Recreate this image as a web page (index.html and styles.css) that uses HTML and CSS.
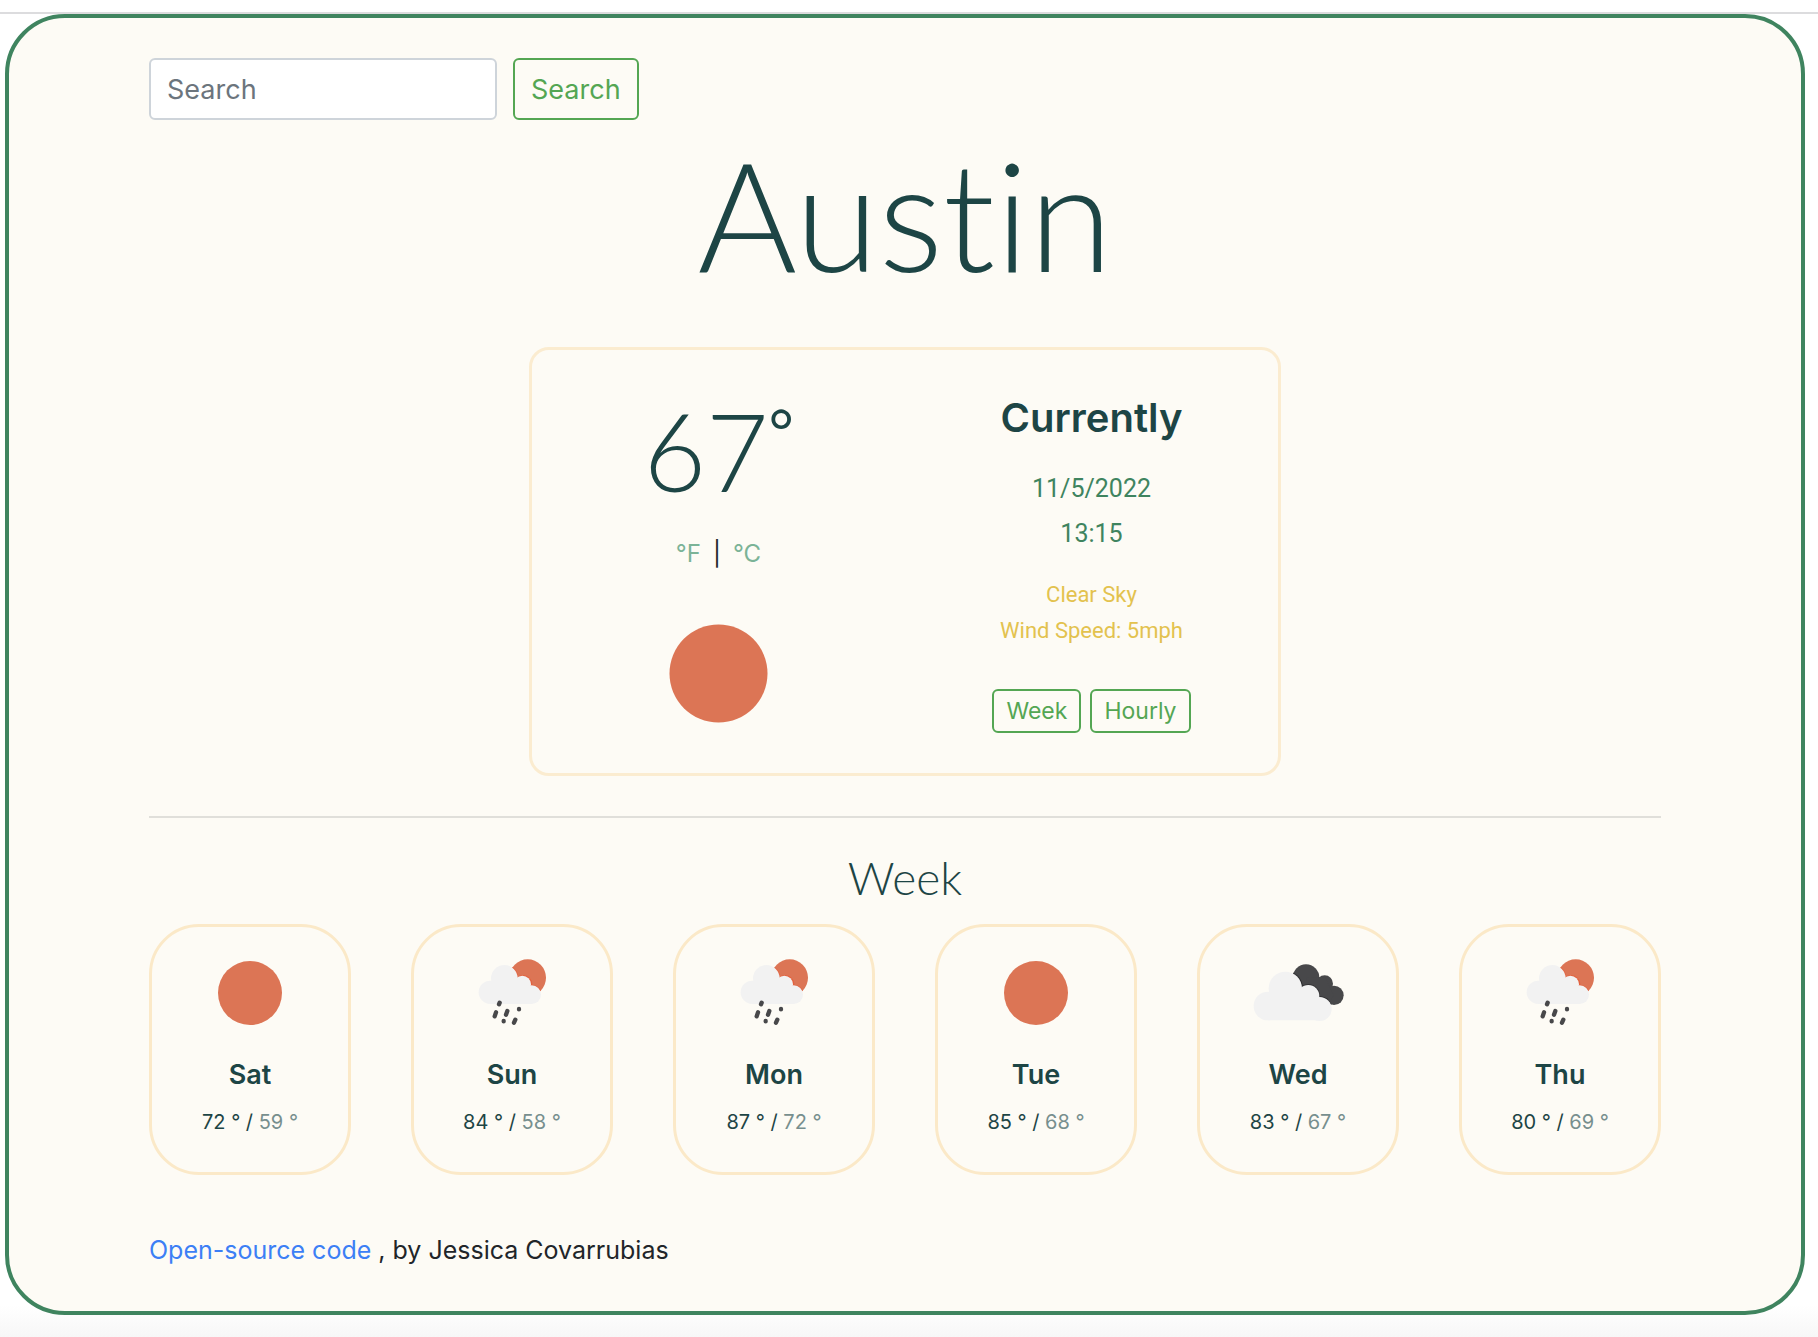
FILE: index.html
```html
<!DOCTYPE html>
<html lang="en">
<head>
<meta charset="utf-8">
<meta name="viewport" content="width=device-width, initial-scale=1">
<title>Weather</title>
<link rel="stylesheet" href="styles.css">
</head>
<body>
<svg class="sprite" width="0" height="0" aria-hidden="true">
  <clipPath id="sun-disc"><circle cx="191" cy="98" r="55"/></clipPath>
  <clipPath id="back-cloud">
    <circle cx="168" cy="98" r="40"/>
    <circle cx="224" cy="116" r="25"/>
    <circle cx="252" cy="151" r="29"/>
    <path d="M168 98l56-2 28 55-20 28-40-20z"/>
  </clipPath>
  <symbol id="sun" viewBox="0 0 96 96">
    <circle cx="48" cy="48" r="32" fill="#dc7555"/>
  </symbol>
  <symbol id="rain" viewBox="0 0 288 288">
    <circle cx="191" cy="98" r="55" fill="#dc7555"/>
    <g fill="#e2623f" clip-path="url(#sun-disc)">
      <circle cx="121" cy="100" r="42"/>
      <circle cx="177" cy="118" r="28"/>
      <circle cx="204" cy="150" r="30"/>
    </g>
    <g fill="#f2f2f2">
      <circle cx="79" cy="142" r="35"/>
      <circle cx="121" cy="100" r="40"/>
      <circle cx="175" cy="118" r="26"/>
      <circle cx="203" cy="149" r="28"/>
      <path d="M79 110h100l24 30v37H79z"/>
    </g>
    <g stroke="#48484a" stroke-width="13" stroke-linecap="round">
      <path d="M107 173l-2 5M96 202l-4 12M130 198l-4 11M165 192v1M119 228v1M154 224l-4 9"/>
    </g>
  </symbol>
  <symbol id="clouds" viewBox="0 0 288 288">
    <g fill="#48484a">
      <circle cx="168" cy="98" r="40"/>
      <circle cx="224" cy="116" r="25"/>
      <circle cx="252" cy="151" r="29"/>
      <path d="M168 98l56-2 28 55-20 28-40-20z"/>
    </g>
    <g fill="#2c2c2e" clip-path="url(#back-cloud)">
      <circle cx="106" cy="130" r="53"/>
      <circle cx="175" cy="153" r="35"/>
      <circle cx="209" cy="192" r="38"/>
    </g>
    <g fill="#f2f2f2">
      <circle cx="54" cy="183" r="43"/>
      <circle cx="106" cy="130" r="50"/>
      <circle cx="175" cy="153" r="33"/>
      <circle cx="209" cy="192" r="36"/>
      <path d="M54 142h120l35 30v54H54z"/>
    </g>
  </symbol>
</svg>

<div class="topline"></div>
<main class="app">
  <form class="search">
    <input class="search-input" type="search" placeholder="Search" aria-label="Search for a city">
    <button class="btn btn-lg" type="button">Search</button>
  </form>

  <h1 class="city">Austin</h1>

  <section class="current">
    <div class="current-col">
      <p class="temperature">67<span class="degree">°</span></p>
      <p class="units"><a href="#f">°F</a><span>|</span><a href="#c">°C</a></p>
      <svg class="current-icon" role="img" aria-label="Clear sky"><use href="#sun"/></svg>
    </div>
    <div class="current-col">
      <h2 class="currently">Currently</h2>
      <p class="date">11/5/2022<br>13:15</p>
      <p class="conditions">Clear Sky<br>Wind Speed: 5mph</p>
      <div class="views">
        <button class="btn" type="button">Week</button>
        <button class="btn" type="button">Hourly</button>
      </div>
    </div>
  </section>

  <hr class="divider">

  <h2 class="week-title">Week</h2>
  <section class="forecast">
    <article class="day">
      <svg class="day-icon" aria-hidden="true"><use href="#sun"/></svg>
      <h3 class="day-name">Sat</h3>
      <p class="day-temps">72 ° / <span class="low">59 °</span></p>
    </article>
    <article class="day">
      <svg class="day-icon" aria-hidden="true"><use href="#rain"/></svg>
      <h3 class="day-name">Sun</h3>
      <p class="day-temps">84 ° / <span class="low">58 °</span></p>
    </article>
    <article class="day">
      <svg class="day-icon" aria-hidden="true"><use href="#rain"/></svg>
      <h3 class="day-name">Mon</h3>
      <p class="day-temps">87 ° / <span class="low">72 °</span></p>
    </article>
    <article class="day">
      <svg class="day-icon" aria-hidden="true"><use href="#sun"/></svg>
      <h3 class="day-name">Tue</h3>
      <p class="day-temps">85 ° / <span class="low">68 °</span></p>
    </article>
    <article class="day">
      <svg class="day-icon" aria-hidden="true"><use href="#clouds"/></svg>
      <h3 class="day-name">Wed</h3>
      <p class="day-temps">83 ° / <span class="low">67 °</span></p>
    </article>
    <article class="day">
      <svg class="day-icon" aria-hidden="true"><use href="#rain"/></svg>
      <h3 class="day-name">Thu</h3>
      <p class="day-temps">80 ° / <span class="low">69 °</span></p>
    </article>
  </section>

  <footer class="credit"><a href="#source">Open-source code</a> , by Jessica Covarrubias</footer>
</main>
</body>
</html>
```
FILE: styles.css
```css
* {
  box-sizing: border-box;
}

body {
  margin: 0;
  padding-bottom: 22px;
  background: linear-gradient(#ffffff, #f7f7f7) no-repeat bottom / 100% 32px;
  color: #212529;
  font-family: Inter, "Liberation Sans", sans-serif;
  font-size: 25px;
}

h1, h2, h3, p {
  margin: 0;
  font-weight: 400;
}

a {
  text-decoration: none;
}

.sprite {
  position: absolute;
}

.topline {
  height: 14px;
  border-bottom: 2px solid #dcdcde;
}

.app {
  margin: 0 13px 0 5px;
  padding: 40px 140px;
  border: 4px solid #3f845f;
  border-radius: 60px;
  background: #fdfbf5;
}

.search {
  display: flex;
  gap: 16px;
}

.search-input {
  width: 348px;
  height: 62px;
  padding: 0 16px;
  border: 2px solid #ced4da;
  border-radius: 6px;
  background: #ffffff;
  color: #212529;
  font: inherit;
  font-size: 27px;
}

.search-input::placeholder {
  color: #6c757d;
  opacity: 1;
}

.btn {
  height: 44px;
  padding: 0 12px;
  border: 2px solid #54a653;
  border-radius: 6px;
  background: transparent;
  color: #54a653;
  font: inherit;
  font-size: 23px;
}

.btn-lg {
  height: 62px;
  padding: 0 16px;
  font-size: 27px;
}

.city {
  color: #1d4545;
  font-family: Lato, sans-serif;
  font-size: 152px;
  font-variant-ligatures: none;
  font-weight: 300;
  line-height: 186px;
  text-align: center;
}

.current {
  display: grid;
  grid-template-columns: 1fr 1fr;
  max-width: 752px;
  margin: 41px auto 0;
  padding: 40px 0 38px;
  border: 3px solid #fbecd0;
  border-radius: 20px;
}

.current-col {
  display: flex;
  flex-direction: column;
  align-items: center;
  text-align: center;
}

.temperature {
  display: flex;
  color: #1d4545;
  font-family: Lato, sans-serif;
  font-size: 108px;
  font-weight: 300;
  line-height: 120px;
}

.degree {
  font-size: 60px;
  font-weight: 400;
  line-height: 80px;
}

.units {
  display: flex;
  gap: 12px;
  margin-top: 24px;
  font-size: 24px;
  line-height: 40px;
}

.units a {
  color: #7bb397;
}

.current-icon {
  width: 147px;
  height: 147px;
  margin: 26px 0 -12px;
}

.currently {
  color: #1d4545;
  font-size: 40px;
  font-weight: 600;
  line-height: 56px;
}

.date {
  margin-top: 20px;
  color: #3f845f;
  font-family: Roboto, sans-serif;
  font-size: 25px;
  line-height: 45px;
}

.conditions {
  margin-top: 21px;
  color: #e3c24e;
  font-family: Roboto, sans-serif;
  font-size: 22px;
  line-height: 36px;
}

.views {
  display: flex;
  gap: 9px;
  margin-top: 40px;
}

.divider {
  height: 2px;
  margin: 40px 0 36px;
  border: 0;
  background: #e0dfda;
}

.week-title {
  color: #1d4545;
  font-family: Lato, sans-serif;
  font-size: 46px;
  font-weight: 300;
  line-height: 48px;
  text-align: center;
}

.forecast {
  display: grid;
  grid-template-columns: repeat(6, 1fr);
  gap: 60px;
  margin-top: 22px;
}

.day {
  display: flex;
  flex-direction: column;
  align-items: center;
  padding: 18px 0 35px;
  border: 3px solid #fbe9c8;
  border-radius: 50px;
  color: #1d4545;
}

.day-icon {
  width: 96px;
  height: 96px;
}

.day-name {
  margin-top: 14px;
  font-size: 27px;
  font-weight: 600;
  line-height: 40px;
}

.day-temps {
  margin-top: 12px;
  font-size: 20px;
  line-height: 30px;
}

.low {
  color: #778f8e;
}

.credit {
  margin-top: 54px;
  line-height: 42px;
}

.credit a {
  color: #3c7ff5;
}
```
